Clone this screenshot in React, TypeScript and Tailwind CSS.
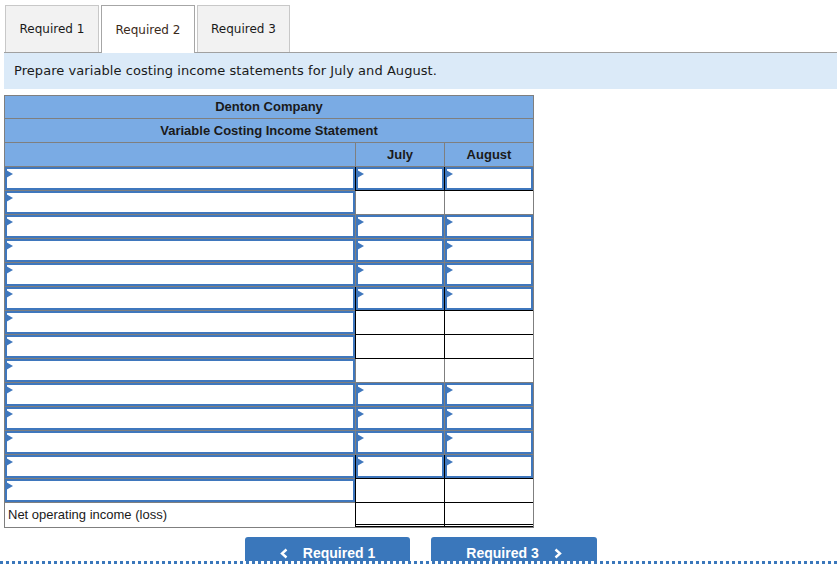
import React from 'react';

const blue = 'border-[#3f77bd]';

// which body rows have inputs in the July / August columns, and how each row is ruled
const rows = [
  { amounts: true, rule: 'single' },
  { amounts: false, rule: 'none' },
  { amounts: true, rule: 'none' },
  { amounts: true, rule: 'none' },
  { amounts: true, rule: 'none' },
  { amounts: true, rule: 'single' },
  { amounts: false, rule: 'single' },
  { amounts: false, rule: 'single' },
  { amounts: false, rule: 'none' },
  { amounts: true, rule: 'none' },
  { amounts: true, rule: 'none' },
  { amounts: true, rule: 'none' },
  { amounts: true, rule: 'single' },
  { amounts: false, rule: 'single' },
];

function Marker() {
  return (
    <span className="absolute left-[-1px] top-[1px] h-0 w-0 border-y-[4px] border-l-[7px] border-y-transparent border-l-[#3f77bd]" />
  );
}

function InputBox() {
  return (
    <div className={`relative h-full w-full border-2 ${blue} bg-white`}>
      <Marker />
    </div>
  );
}

function AmountCell({ input, rule }: { input: boolean; rule: string }) {
  const bottom =
    rule === 'single'
      ? 'border-b border-black'
      : rule === 'double'
        ? 'border-b-[3px] border-double border-black'
        : 'border-b border-[#7f7f7f]';
  return (
    <div className={`h-[24px] border-l border-[#7f7f7f] ${bottom}`}>
      {input && <InputBox />}
    </div>
  );
}

function Tab({ label, active, w }: { label: string; active?: boolean; w: string }) {
  return (
    <div
      className={`${w} flex items-center justify-center border border-b-0 text-[12px] ${
        active
          ? 'relative -mb-px h-[48px] border-[#a6a6a6] bg-white text-[#3a2a1a]'
          : 'h-[47px] border-[#c8c8c8] bg-[#f2f2f2] text-[#1a1a1a]'
      }`}
    >
      {label}
    </div>
  );
}

export default function App() {
  return (
    <div className="min-h-[565px] w-[837px] bg-white pt-[5px] font-['DejaVu_Sans',sans-serif]">
      <div className="ml-[4px] flex gap-[2px] border-b border-[#a0a0a0] pl-[1px]">
        <Tab label="Required 1" w="w-[94px]" />
        <Tab label="Required 2" w="w-[94px]" active />
        <Tab label="Required 3" w="w-[93px]" />
      </div>

      <div className="ml-[4px] flex h-[36px] items-center bg-[#dbeaf8] pl-[10px] text-[13px] tracking-[0.06px] text-[#1a1a1a]">
        Prepare variable costing income statements for July and August.
      </div>

      <div className="ml-[4px] mt-[6px] w-[530px] border border-[#7f7f7f] font-['Liberation_Sans',Arial,sans-serif] text-[13px] text-[#1a1a1a]">
        <div className="flex h-[23px] items-center justify-center border-b border-[#7f7f7f] bg-[#7aabe4] font-bold">
          Denton Company
        </div>
        <div className="flex h-[24px] items-center justify-center border-b border-[#7f7f7f] bg-[#7aabe4] font-bold">
          Variable Costing Income Statement
        </div>
        <div className="grid h-[24px] grid-cols-[350px_89px_89px] border-b border-[#7f7f7f] bg-[#7aabe4] font-bold">
          <div />
          <div className="flex items-center justify-center border-l border-[#7f7f7f]">July</div>
          <div className="flex items-center justify-center border-l border-[#7f7f7f]">August</div>
        </div>

        {rows.map((r, i) => (
          <div key={i} className="grid grid-cols-[350px_89px_89px]">
            <div className="h-[24px] border-b border-[#7f7f7f]">
              <InputBox />
            </div>
            <AmountCell input={r.amounts} rule={r.rule} />
            <AmountCell input={r.amounts} rule={r.rule} />
          </div>
        ))}

        <div className="grid grid-cols-[350px_89px_89px]">
          <div className="flex h-[24px] items-center pl-[3px]">Net operating income (loss)</div>
          <AmountCell input={false} rule="double" />
          <AmountCell input={false} rule="double" />
        </div>
      </div>

      <div className="mt-[9px] flex justify-center gap-[21px] border-b-[3px] border-dotted border-[#3a77bb] pl-[5px] font-['Liberation_Sans',Arial,sans-serif]">
        <button className="flex h-[24px] w-[165px] items-center justify-center gap-[15px] rounded-t-[3px] bg-[#3a77bb] pt-[9px] text-[14px] font-bold text-white">
          <svg width="8" height="11" viewBox="0 0 8 11">
            <polyline points="6.5,1.5 2,5.5 6.5,9.5" fill="none" stroke="white" strokeWidth="2.4" />
          </svg>
          Required 1
        </button>
        <button className="flex h-[24px] w-[166px] items-center justify-center gap-[15px] rounded-t-[3px] bg-[#3a77bb] pt-[9px] text-[14px] font-bold text-white">
          Required 3
          <svg width="8" height="11" viewBox="0 0 8 11">
            <polyline points="1.5,1.5 6,5.5 1.5,9.5" fill="none" stroke="white" strokeWidth="2.4" />
          </svg>
        </button>
      </div>
    </div>
  );
}
